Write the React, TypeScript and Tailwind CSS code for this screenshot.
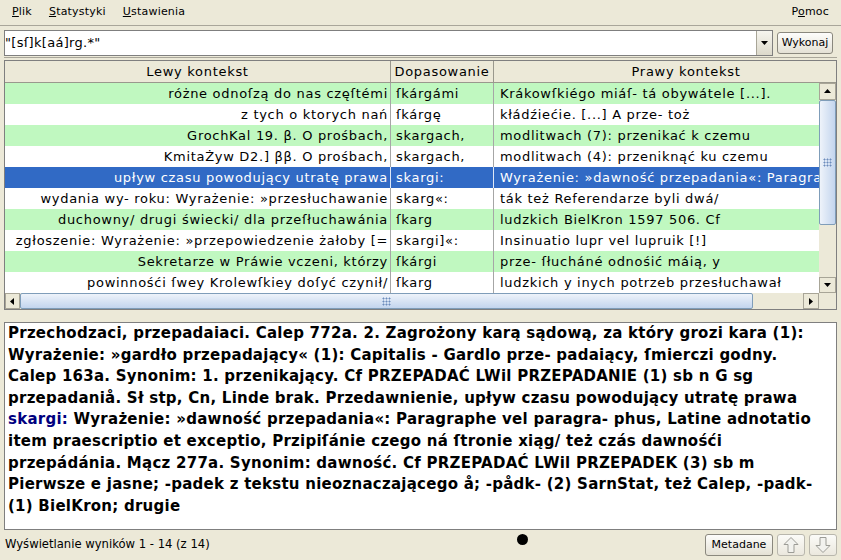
import React from "react";

type Row = { left: string; match: string; right: string; tone: "green" | "white" | "sel" };

const rows: Row[] = [
  { left: "różne odnoſzą do nas częſtémi", match: "ſkárgámi", right: "Krákowſkiégo miáſ- tá obywátele [...].", tone: "green" },
  { left: "z tych o ktorych nań", match: "ſkárgę", right: "kłádźiećie. [...] A prze- toż", tone: "white" },
  { left: "GrochKal 19. β. O prośbach,", match: "skargach,", right: "modlitwach (7): przenikać k czemu", tone: "green" },
  { left: "KmitaŻyw D2.] ββ. O prośbach,", match: "skargach,", right: "modlitwach (4): przeniknąć ku czemu", tone: "white" },
  { left: "upływ czasu powodujący utratę prawa", match: "skargi:", right: "Wyrażenie: »dawność przepadania«: Paragraphe vel paragra- phus", tone: "sel" },
  { left: "wydania wy- roku: Wyrażenie: »przesłuchawanie", match: "skarg«:", right: "ták też Referendarze byli dwá/", tone: "white" },
  { left: "duchowny/ drugi świecki/ dla przeſłuchawánia", match: "ſkarg", right: "ludzkich BielKron 1597 506. Cf", tone: "green" },
  { left: "zgłoszenie: Wyrażenie: »przepowiedzenie żałoby [=", match: "skargi]«:", right: "Insinuatio lupr vel lupruik [!]", tone: "white" },
  { left: "Sekretarze w Práwie vczeni, którzy", match: "ſkárgi", right: "prze- ſłucháné odnośić máią, y", tone: "green" },
  { left: "powinnośći ſwey Krolewſkiey doſyć czynił/", match: "ſkarg", right: "ludzkich y inych potrzeb przesłuchawał", tone: "white" },
];

const detail = [
  "Przechodzaci, przepadaiaci. Calep 772a. 2. Zagrożony karą sądową, za który grozi kara (1):",
  "Wyrażenie: »gardło przepadający« (1): Capitalis - Gardlo prze- padaiący, ſmierczi godny.",
  "Calep 163a. Synonim: 1. przenikający. Cf PRZEPADAĆ LWil PRZEPADANIE (1) sb n G sg",
  "przepadaniå. Sł stp, Cn, Linde brak. Przedawnienie, upływ czasu powodujący utratę prawa",
  "",
  "item praescriptio et exceptio, Przipiſánie czego ná ſtronie xiąg/ też czás dawnośći",
  "przepádánia. Mącz 277a. Synonim: dawność. Cf PRZEPADAĆ LWil PRZEPADEK (3) sb m",
  "Pierwsze e jasne; -padek z tekstu nieoznaczającego å; -pådk- (2) SarnStat, też Calep, -padk-",
  "(1) BielKron; drugie",
];

function Tri({ dir }: { dir: "up" | "down" | "left" | "right" }) {
  const pts = {
    up: "1,6 8,6 4.5,2",
    down: "1,2 8,2 4.5,6",
    left: "6,1 6,8 2,4.5",
    right: "2,1 2,8 6,4.5",
  }[dir];
  return (
    <svg width="9" height="9" viewBox="0 0 9 9">
      <polygon points={pts} fill="#000" />
    </svg>
  );
}

function ScrollBtn({ dir, className }: { dir: "up" | "down" | "left" | "right"; className: string }) {
  return (
    <div className={`flex items-center justify-center bg-[#ece9d8] border border-[#a8a597] ${className}`}>
      <Tri dir={dir} />
    </div>
  );
}

function Grip() {
  return <div className="w-[9px] h-[9px] bg-[radial-gradient(circle,#6c8cbc_0.9px,transparent_1.1px)] bg-[length:3px_3px]" />;
}

function HollowArrow({ up }: { up: boolean }) {
  return (
    <svg width="16" height="18" viewBox="0 0 16 18">
      <polygon
        points={up ? "8,1.5 15,8.5 11,8.5 11,16.5 5,16.5 5,8.5 1,8.5" : "8,16.5 15,9.5 11,9.5 11,1.5 5,1.5 5,9.5 1,9.5"}
        fill="#f2f2ee"
        stroke="#9c9c96"
        strokeWidth="1"
      />
    </svg>
  );
}

export default function App() {
  return (
    <div className="w-[841px] h-[560px] overflow-hidden bg-[#ece9d8] flex flex-col font-['DejaVu_Sans',sans-serif] text-black">
      {/* Menu bar */}
      <div className="h-[26px] shrink-0 border-b border-[#a9a69a] flex items-center pl-[12px] pr-[12px] text-[11px] tracking-[0.2px]">
        <div className="flex gap-[17px]">
          <span><u>P</u>lik</span>
          <span><u>S</u>tatystyki</span>
          <span><u>U</u>stawienia</span>
        </div>
        <span className="ml-auto">P<u>o</u>moc</span>
      </div>

      {/* Search row */}
      <div className="flex items-center pl-[4px] pr-[8px] mt-[4px] h-[26px] shrink-0">
        <div className="flex-1 h-[26px] flex border border-[#7f7f7f] bg-white">
          <div className="flex-1 flex items-center text-[13px] tracking-[0.3px] whitespace-nowrap">"[sſ]k[aá]rg.*"</div>
          <div className="w-[16px] border-l border-[#a8a597] bg-[linear-gradient(#f6f5ef,#dcd9cb)] flex items-center justify-center">
            <Tri dir="down" />
          </div>
        </div>
        <button className="ml-[4px] w-[56px] h-[22px] rounded-[3px] border border-[#8a887e] bg-[linear-gradient(#fdfdfb,#e4e1d5)] text-[11px] flex items-center justify-center">
          Wykonaj
        </button>
      </div>

      {/* Results table */}
      <div className="mx-[4px] mt-[1px] border-t border-[#a9a69a] pt-[2px] shrink-0">
        <div className="h-[250px] border border-[#7f7f7f] flex flex-col bg-[#ece9d8]">
          <div className="h-[22px] shrink-0 overflow-hidden border-b border-[#9a988d]">
            <div className="flex w-[873px] h-full text-[13px] tracking-[0.7px]">
              <div className="w-[386px] border-r border-[#9a988d] flex items-center justify-center">Lewy kontekst</div>
              <div className="w-[103px] border-r border-[#9a988d] flex items-center justify-center">Dopasowanie</div>
              <div className="w-[384px] flex items-center justify-center">Prawy kontekst</div>
            </div>
          </div>
          <div className="flex h-[210px]">
            <div className="flex-1 overflow-hidden bg-white">
              {rows.map((r, i) => {
                const bg = r.tone === "sel" ? "bg-[#316ac5] text-white" : r.tone === "green" ? "bg-[#c0f8c0]" : "bg-white";
                const line = r.tone === "sel" ? "border-[#dfe8f6]" : "border-[#a6a6a6]";
                return (
                  <div key={i} className={`flex h-[21px] w-[873px] text-[13px] tracking-[0.7px] whitespace-nowrap ${bg}`}>
                    <div className={`w-[386px] border-r ${line} flex items-center justify-end overflow-hidden pr-[2px]`}>
                      <span className="shrink-0">{r.left}</span>
                    </div>
                    <div className={`w-[103px] border-r ${line} flex items-center overflow-hidden pl-[5px]`}>{r.match}</div>
                    <div className="w-[384px] flex items-center overflow-hidden pl-[6px]">{r.right}</div>
                  </div>
                );
              })}
            </div>
            <div className="w-[17px] flex flex-col bg-[#ece9d8]">
              <ScrollBtn dir="up" className="h-[17px]" />
              <div className="h-[125px] border border-[#7f9db9] rounded-[2px] bg-[linear-gradient(90deg,#eef3fa,#c3d5ee)] flex items-center justify-center">
                <Grip />
              </div>
              <div className="flex-1" />
              <ScrollBtn dir="down" className="h-[16px]" />
            </div>
          </div>
          <div className="flex h-[16px]">
            <ScrollBtn dir="left" className="w-[15px]" />
            <div className="w-[733px] border border-[#7f9db9] rounded-[2px] bg-[linear-gradient(#eef3fa,#c3d5ee)] flex items-center justify-center">
              <Grip />
            </div>
            <div className="flex-1" />
            <ScrollBtn dir="right" className="w-[16px]" />
            <div className="w-[17px]" />
          </div>
        </div>
      </div>

      {/* Detail text */}
      <div className="mx-[4px] mt-[12px] h-[208px] shrink-0 border border-[#7f7f7f] bg-white pl-[3px] text-[15px] tracking-[0.25px] font-bold leading-[21.6px] whitespace-nowrap overflow-hidden">
        {detail.map((l, i) =>
          i === 4 ? (
            <div key={i}>
              <span className="text-[#000080]">skargi:</span> Wyrażenie: »dawność przepadania«: Paragraphe vel paragra- phus, Latine adnotatio
            </div>
          ) : (
            <div key={i}>{l}</div>
          )
        )}
      </div>

      {/* Status bar */}
      <div className="flex-1 flex items-center pl-[5px] pr-[4px] text-[11.6px]">
        <span>Wyświetlanie wyników 1 - 14 (z 14)</span>
        <div className="ml-[307px] w-[11px] h-[11px] rounded-full bg-black -mt-[12px]" />
        <div className="ml-auto flex gap-[4px] text-[11px]">
          <button className="w-[68px] h-[22px] rounded-[3px] border border-[#8a887e] bg-[linear-gradient(#fdfdfb,#e4e1d5)] flex items-center justify-center">
            Metadane
          </button>
          <button className="w-[28px] h-[22px] rounded-[3px] border border-[#b9b7ad] bg-[linear-gradient(#fbfbf8,#ebe8de)] flex items-center justify-center">
            <HollowArrow up />
          </button>
          <button className="w-[28px] h-[22px] rounded-[3px] border border-[#b9b7ad] bg-[linear-gradient(#fbfbf8,#ebe8de)] flex items-center justify-center">
            <HollowArrow up={false} />
          </button>
        </div>
      </div>
    </div>
  );
}
